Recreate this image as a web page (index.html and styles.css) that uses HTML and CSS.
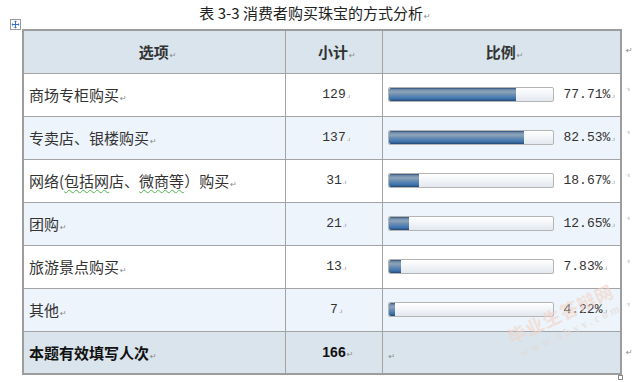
FILE: index.html
```html
<!DOCTYPE html>
<html lang="zh">
<head>
<meta charset="utf-8">
<link rel="stylesheet" href="styles.css">
</head>
<body>
<div class="page">
  <div class="title">表 3-3 消费者购买珠宝的方式分析<span class="pm">↵</span></div>
  <div class="wrap">
    <span class="handle"><svg width="11" height="11" viewBox="0 0 11 11"><rect x="0.5" y="0.5" width="10" height="10" fill="#fff" stroke="#9a9a9a"/><path d="M5.5 2v7M2 5.5h7" stroke="#2f6fd6" stroke-width="1"/><path d="M5.5 1.5l-1.5 1.5h3zM5.5 9.5l-1.5-1.5h3zM1.5 5.5l1.5-1.5v3zM9.5 5.5l-1.5-1.5v3z" fill="#2f6fd6"/></svg></span>
    <table class="tbl">
      <colgroup><col class="c1"><col class="c2"><col class="c3"></colgroup>
      <thead>
        <tr class="head">
          <th>选项<span class="pm">↵</span></th>
          <th>小计<span class="pm">↵</span></th>
          <th>比例<span class="pm">↵</span></th>
        </tr>
      </thead>
      <tbody>
        <tr class="odd">
          <td class="opt">商场专柜购买<span class="pm">↵</span></td>
          <td class="num">129<span class="cm">.ı</span></td>
          <td class="ratio"><div class="rc"><span class="bar"><span class="fill" style="width:77.71%"></span></span><span class="pct">77.71%<span class="cm">.ı</span></span></div></td>
        </tr>
        <tr class="even">
          <td class="opt">专卖店、银楼购买<span class="pm">↵</span></td>
          <td class="num">137<span class="cm">.ı</span></td>
          <td class="ratio"><div class="rc"><span class="bar"><span class="fill" style="width:82.53%"></span></span><span class="pct">82.53%<span class="cm">.ı</span></span></div></td>
        </tr>
        <tr class="odd">
          <td class="opt">网络(<span class="sq">包括网</span>店、<span class="sq">微商等</span>）购买<span class="pm">↵</span></td>
          <td class="num">31<span class="cm">.ı</span></td>
          <td class="ratio"><div class="rc"><span class="bar"><span class="fill" style="width:18.67%"></span></span><span class="pct">18.67%<span class="cm">.ı</span></span></div></td>
        </tr>
        <tr class="even">
          <td class="opt">团购<span class="pm">↵</span></td>
          <td class="num">21<span class="cm">.ı</span></td>
          <td class="ratio"><div class="rc"><span class="bar"><span class="fill" style="width:12.65%"></span></span><span class="pct">12.65%<span class="cm">.ı</span></span></div></td>
        </tr>
        <tr class="odd">
          <td class="opt">旅游景点购买<span class="pm">↵</span></td>
          <td class="num">13<span class="cm">.ı</span></td>
          <td class="ratio"><div class="rc"><span class="bar"><span class="fill" style="width:7.83%"></span></span><span class="pct">7.83%<span class="cm">.ı</span></span></div></td>
        </tr>
        <tr class="even">
          <td class="opt">其他<span class="pm">↵</span></td>
          <td class="num">7<span class="cm">.ı</span></td>
          <td class="ratio"><div class="rc"><span class="bar"><span class="fill" style="width:4.22%"></span></span><span class="pct">4.22%<span class="cm">.ı</span></span></div></td>
        </tr>
      </tbody>
      <tfoot>
        <tr class="foot">
          <td class="opt total">本题有效填写人次<span class="pm">↵</span></td>
          <td class="num total-num">166<span class="pm">↵</span></td>
          <td class="ratio"><span class="pm pm-left">↵</span></td>
        </tr>
      </tfoot>
    </table>
    <div class="marks">
      <span class="pm">↵</span>
      <span class="cm">·ı</span>
      <span class="cm">·ı</span>
      <span class="cm">·ı</span>
      <span class="cm">·ı</span>
      <span class="cm">·ı</span>
      <span class="cm">·ı</span>
      <span class="pm">↵</span>
    </div>
    <div class="wm">
      <div class="wm1">毕业生答辩网</div>
      <div class="wm2">www.sbvv.com</div>
    </div>
    <span class="resize"></span>
  </div>
</div>
</body>
</html>
```

FILE: styles.css
```css
* { box-sizing: border-box; }
html, body { margin: 0; padding: 0; background: #fff; }
body {
  font-family: "Noto Sans CJK SC", "DejaVu Sans", sans-serif;
  color: #333;
  width: 637px;
  height: 382px;
  overflow: hidden;
}
.page { padding-left: 22px; }
.title {
  width: 598px;
  height: 29px;
  line-height: 25px;
  font-size: 15px;
  text-align: center;
  padding-right: 12px;
  color: #222;
}
.pm {
  font-family: "DejaVu Sans", sans-serif;
  font-size: 8px;
  color: #8a8a8a;
  font-weight: normal;
  margin-left: 1px;
  display: inline-block;
  width: 0;
  overflow: visible;
  white-space: nowrap;
}
.title .pm { width: auto; }
.cm {
  font-family: "DejaVu Sans", sans-serif;
  font-size: 6px;
  color: #888;
  display: inline-block;
  width: 0;
  white-space: nowrap;
  margin-left: 1px;
}
.wrap {
  position: relative;
  display: flex;
  align-items: flex-start;
}
.handle {
  position: absolute;
  left: -12px;
  top: -10px;
  width: 11px;
  height: 11px;
  line-height: 0;
}
.tbl {
  border-collapse: collapse;
  width: 598px;
  table-layout: fixed;
  border: 2px solid #9d9d9d;
}
.c1 { width: 262px; }
.c2 { width: 97px; }
.c3 { width: 239px; }
.tbl th, .tbl td {
  border: 1px solid #a3a3a3;
  height: 43px;
  padding: 0;
  vertical-align: middle;
}
.tbl th {
  font-size: 15px;
  font-weight: bold;
  color: #333;
  text-align: center;
}
.head, .foot { background: #d9e4ec; }
.odd { background: #ffffff; }
.even { background: #edf4fb; }
.opt {
  font-size: 15px;
  padding-left: 5px !important;
  color: #333;
  white-space: nowrap;
}
.num {
  text-align: center;
  font-family: "Liberation Mono", monospace;
  font-size: 13px;
  color: #333;
  padding-left: 2px !important;
}
.ratio { padding-left: 5px !important; }
.rc {
  display: flex;
  align-items: center;
}
.bar {
  display: block;
  width: 166px;
  height: 15px;
  border: 1px solid #b4b4b4;
  border-radius: 2px;
  background: linear-gradient(#ffffff 0%, #f4f6f9 40%, #e3e8ef 100%);
  overflow: hidden;
  flex: none;
}
.fill {
  display: block;
  height: 100%;
  border-radius: 2px 0 0 2px;
  background: linear-gradient(#2c5077 0%, #6f8aa7 12%, #8ea5bc 30%, #6f8fb1 50%, #4d7fb5 70%, #3c6fa8 85%, #23466d 100%);
}
.pct {
  font-family: "Liberation Mono", monospace;
  font-size: 13px;
  color: #333;
  margin-left: 10px;
  white-space: nowrap;
}
.sq {
  text-decoration: underline wavy #4db84d;
  text-decoration-thickness: 1px;
  text-underline-offset: 2px;
}
.total {
  font-weight: bold;
  color: #111;
}
.total-num {
  font-family: "Liberation Sans", sans-serif;
  font-weight: bold;
  font-size: 14px;
  color: #111;
}
.pm-left { margin-left: 1px; }
.marks {
  display: grid;
  grid-template-rows: 43px repeat(6, 43px) 44px;
  margin-left: 3px;
  align-items: center;
}
.marks .pm { width: auto; }
.marks .cm { width: auto; margin-top: -10px; }
.wm {
  position: absolute;
  left: 484px;
  top: 268px;
  width: 125px;
  transform: rotate(-25deg);
  pointer-events: none;
  color: #f3d3c4;
  opacity: 0.6;
}
.wm1 {
  font-size: 18px;
  font-weight: bold;
  letter-spacing: 1px;
  white-space: nowrap;
}
.wm2 {
  font-family: "Liberation Serif", serif;
  font-size: 12px;
  font-weight: bold;
  letter-spacing: 3px;
  margin-left: 4px;
  color: #e6dad3;
  white-space: nowrap;
}
.resize {
  position: absolute;
  left: 596px;
  top: 346px;
  width: 5px;
  height: 5px;
  border: 1px solid #888;
  background: #fff;
}
```
